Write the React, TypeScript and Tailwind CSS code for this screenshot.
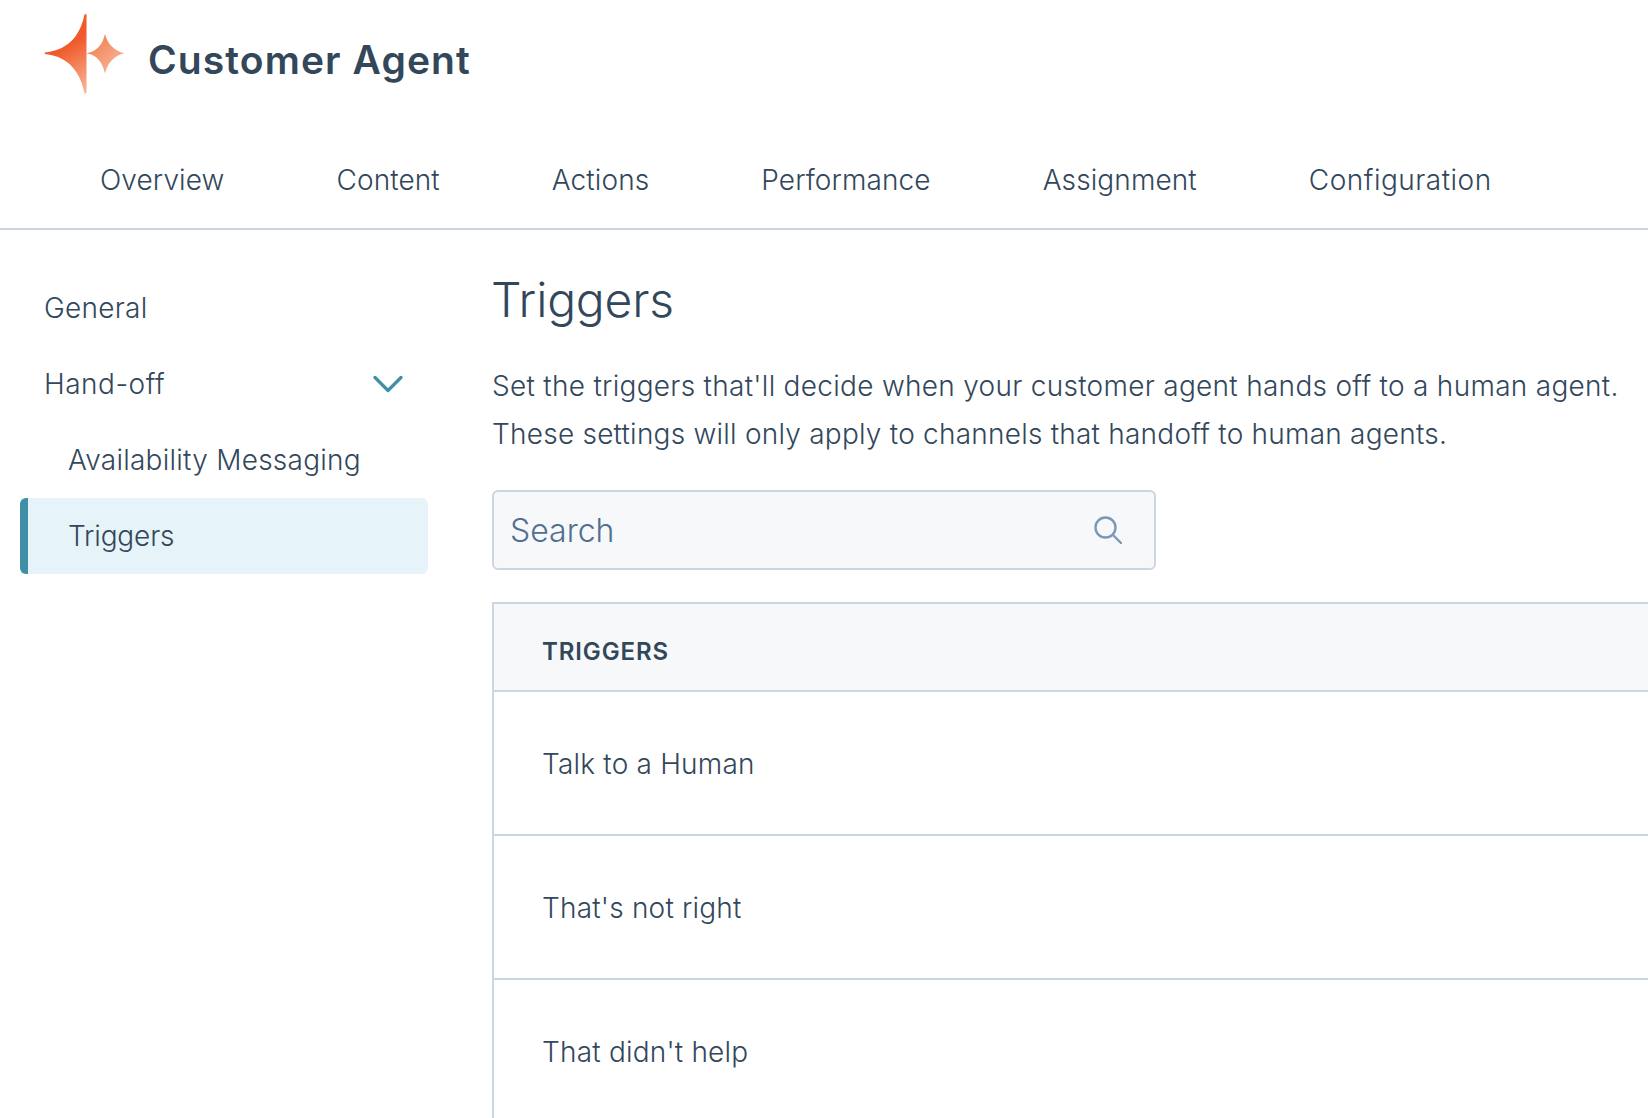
import clsx from "clsx";

const TABS = ["Overview", "Content", "Actions", "Performance", "Assignment", "Configuration"];
const ROWS = ["Talk to a Human", "That's not right", "That didn't help"];

function Logo() {
    return (
        <svg width="84" height="80" viewBox="42 14 84 80" className="shrink-0">
            <defs>
                <linearGradient id="bigStar" x1="50" y1="20" x2="95" y2="95" gradientUnits="userSpaceOnUse">
                    <stop offset="0.35" stopColor="#f05a2a" />
                    <stop offset="1" stopColor="#fbc4a8" />
                </linearGradient>
                <linearGradient id="smallStar" x1="88" y1="36" x2="122" y2="72" gradientUnits="userSpaceOnUse">
                    <stop offset="0" stopColor="#f07a4c" />
                    <stop offset="1" stopColor="#f9bd9e" />
                </linearGradient>
            </defs>
            <path d="M83.5 14.5 Q84.5 13.5 85.5 14.5 V93 Q84.5 94 83.5 93 C80 75.5 70 56.5 44 54 Q43.5 53 44 52.5 C70 50 80 32 83.5 14.5 Z" fill="url(#bigStar)" />
            <path d="M104 34 C106.5 44 113.5 51 123.5 53.3 C113.5 55.5 106.5 63 104 73.5 C101.5 63 97 55.5 85.5 53.3 C97 51 101.5 44 104 34 Z" fill="url(#smallStar)" />
        </svg>
    );
}

function SearchIcon() {
    return (
        <svg width="28" height="28" viewBox="0 0 28 28" fill="none" stroke="#7c98b6" strokeWidth="2.4" strokeLinecap="round">
            <circle cx="11.5" cy="11.5" r="10" />
            <path d="M19 19 L27 27" />
        </svg>
    );
}

function Chevron() {
    return (
        <svg width="30" height="18" viewBox="0 0 30 18" fill="none" stroke="#3f8fa8" strokeWidth="3.2" strokeLinecap="round" strokeLinejoin="round">
            <path d="M2 2.5 L15 15.5 L28 2.5" />
        </svg>
    );
}

export default function App() {
    return (
        <div className="h-[1118px] w-full overflow-hidden bg-white font-['Inter',sans-serif] text-[#33475b]">
            {/* Header */}
            <div className="flex items-center gap-[21px] pl-[43px] pt-[14px]">
                <Logo />
                <h1 className="pt-[12px] text-[39px] leading-[46px] font-semibold tracking-[1.1px]">Customer Agent</h1>
            </div>

            {/* Tabs */}
            <div className="mt-[42px] flex h-[94px] items-center border-b-2 border-[#cbd6e2] pb-[4px] pl-[44px]">
                {TABS.map((tab) => (
                    <div
                        key={tab}
                        className={clsx(
                            "px-[56px] text-[28px] leading-9 font-light",
                            tab === "Configuration" ? "tracking-[0.5px]" : "tracking-[0.1px]",
                        )}
                    >
                        {tab}
                    </div>
                ))}
            </div>

            <div className="flex">
                {/* Sidebar */}
                <div className="ml-[20px] w-[408px] shrink-0 pt-[40px] text-[28px] font-light tracking-[0.25px]">
                    <div className="flex h-[76px] items-center pl-[24px]">General</div>
                    <div className="flex h-[76px] items-center justify-between pl-[24px] pr-[25px]">
                        <span className="tracking-[0.5px]">Hand-off</span>
                        <Chevron />
                    </div>
                    <div className="flex h-[76px] items-center pl-[48px]">Availability Messaging</div>
                    <div className="flex h-[76px] items-center rounded-[6px] border-l-[8px] border-[#3f8fa8] bg-[#e6f3f8] pl-[40px] tracking-[-0.15px]">
                        Triggers
                    </div>
                </div>

                {/* Main */}
                <div className="ml-[64px] min-w-0 flex-1 pt-[40px]">
                    <h2 className="-ml-px text-[48px] leading-[60px] font-light tracking-[-0.2px]">Triggers</h2>
                    <p className="mt-[32px] whitespace-nowrap text-[28px] leading-[48px] font-light tracking-[0.29px]">
                        Set the triggers that'll decide when your customer agent hands off to a human agent.
                        <br />
                        <span className="tracking-[0.23px]">These settings will only apply to channels that handoff to human agents.</span>
                    </p>

                    <div className="mt-[32px] flex h-[80px] w-[664px] items-center justify-between rounded-[6px] border-2 border-[#cbd6e2] bg-[#f6f8fa] pl-[16px] pr-[32px]">
                        <span className="pt-[2px] text-[32px] font-light text-[#516f90]">Search</span>
                        <SearchIcon />
                    </div>

                    <div className="mt-[32px] border-l-2 border-t-2 border-[#cbd6e2]">
                        <div className="flex h-[88px] items-center border-b-2 border-[#cbd6e2] bg-[#f6f8fa] pl-[48px] pt-[10px] text-[24px] font-semibold tracking-[0.9px]">
                            TRIGGERS
                        </div>
                        {ROWS.map((row) => (
                            <div key={row} className="flex h-[144px] items-center border-b-2 border-[#cbd6e2] pl-[48px] pt-[1px] text-[28px] font-light tracking-[0.2px]">
                                {row}
                            </div>
                        ))}
                    </div>
                </div>
            </div>
        </div>
    );
}
